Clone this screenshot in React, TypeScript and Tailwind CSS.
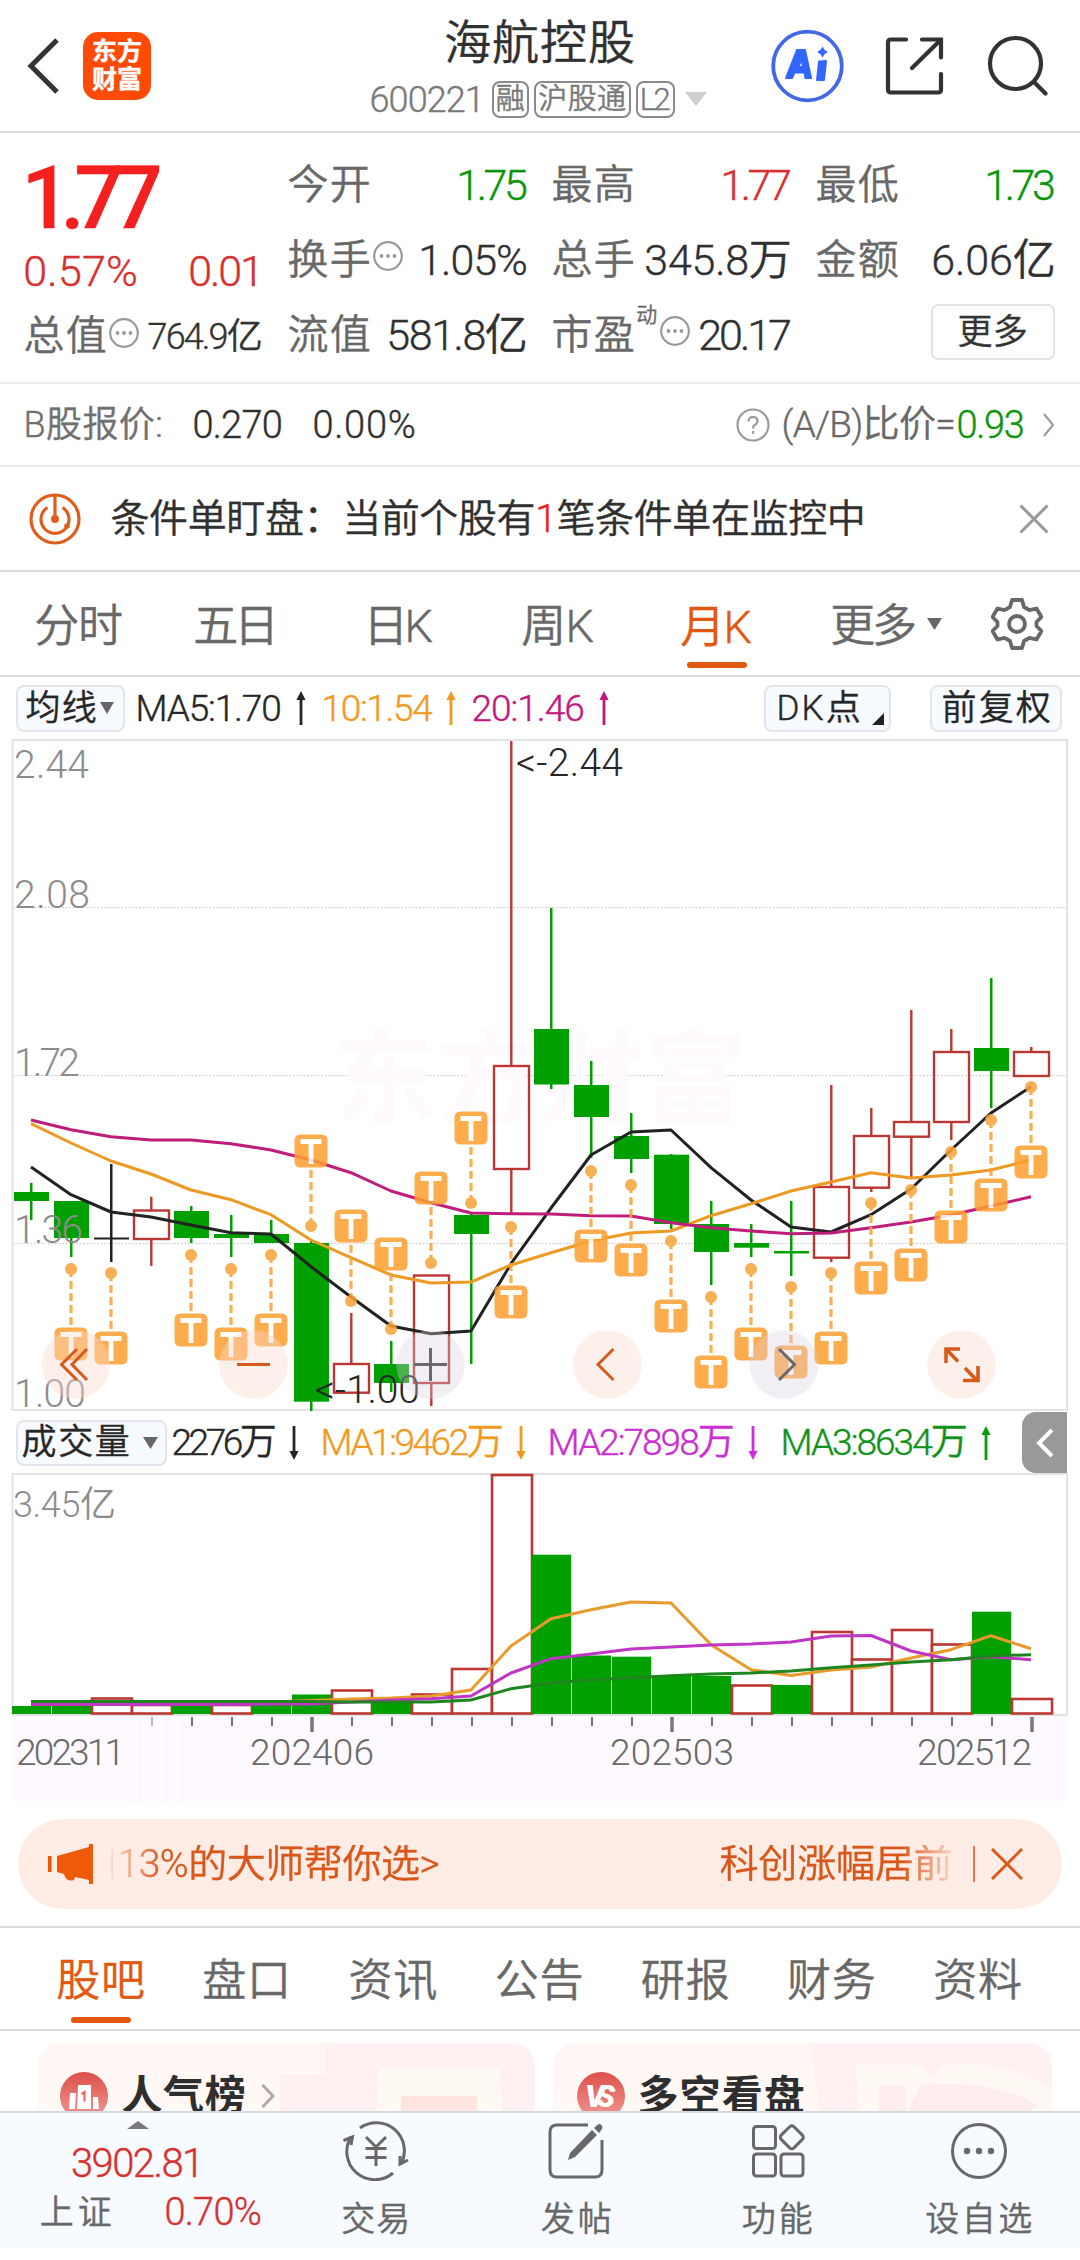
import { useLayoutEffect, useRef, useState } from "react";
import type { ReactNode } from "react";

/** Single-line text whose tracking is adjusted so that it spans exactly `w` pixels. */
function Fit({ w, className = "", children }: { w: number; className?: string; children: ReactNode }) {
  const ref = useRef<HTMLSpanElement>(null);
  const [tracking, setTracking] = useState(0);
  useLayoutEffect(() => {
    const el = ref.current;
    if (!el) return;
    el.style.letterSpacing = "0px";
    const count = Array.from(el.textContent ?? "").length;
    const size = parseFloat(getComputedStyle(el).fontSize);
    const natural = el.getBoundingClientRect().width;
    const value = count > 1 ? (w + size * 0.06 - natural) / (count - 1) : 0;
    el.style.letterSpacing = value + "px";
    setTracking(value);
  }, [w]);
  return (
    <span className={"block shrink-0 whitespace-nowrap leading-none " + className} style={{ width: w }}>
      <span ref={ref} className="-ml-[0.04em] inline-block" style={{ letterSpacing: tracking }}>
        {children}
      </span>
    </span>
  );
}

function Arrow({ down = false, className = "" }: { down?: boolean; className?: string }) {
  return (
    <svg viewBox="0 0 10 34" className={"h-[34px] w-[10px] shrink-0 " + (down ? "rotate-180 " : "") + className}>
      <path d="M5 6V34" stroke="currentColor" strokeWidth="2.8" />
      <path d="M5 0L9.6 9H0.4Z" fill="currentColor" />
    </svg>
  );
}

function Tri({ className = "" }: { className?: string }) {
  return (
    <svg viewBox="0 0 16 12" className={"shrink-0 " + className} preserveAspectRatio="none">
      <path d="M0 0H16L8 12Z" fill="currentColor" />
    </svg>
  );
}

function Dots({ className = "" }: { className?: string }) {
  return (
    <svg viewBox="0 0 30 30" className={"h-[30px] w-[30px] shrink-0 text-[#999] " + className}>
      <circle cx="15" cy="15" r="13.8" fill="none" stroke="currentColor" strokeWidth="2.2" />
      <circle cx="8.5" cy="15" r="1.9" fill="currentColor" />
      <circle cx="15" cy="15" r="1.9" fill="currentColor" />
      <circle cx="21.5" cy="15" r="1.9" fill="currentColor" />
    </svg>
  );
}

function Header() {
  return (
    <header className="grid h-[133px] grid-cols-[371px_338px_1fr] border-b-2 border-[#dcdcdc]">
      <div className="flex items-center pl-[26px]">
        <svg viewBox="0 0 34 56" className="h-[56px] w-[34px]" fill="none" stroke="#333" strokeWidth="5">
          <path d="M31 2L5 28L31 54" />
        </svg>
        <div className="ml-[23px] flex h-[68px] w-[68px] flex-col items-center justify-center rounded-[15px] bg-[#ff4a08] text-[25px] font-bold leading-[28px] text-white">
          <span>东方</span>
          <span>财富</span>
        </div>
      </div>
      <div className="flex flex-col">
        <div className="mt-[17px] flex h-[50px] items-center justify-center text-[#303030]">
          <Fit w={188} className="text-[47px]">海航控股</Fit>
        </div>
        <div className="mt-[14px] flex h-[36px] items-center text-[#7a7a7a]">
          <Fit w={113} className="mt-[2px] text-[36px]">600221</Fit>
          <span className="ml-[8px] flex h-[37px] w-[37px] items-center justify-center rounded-[8px] border-2 border-[#8a8a8a]">
            <Fit w={27} className="text-[29px]">融</Fit>
          </span>
          <span className="ml-[5px] flex h-[37px] w-[97px] items-center justify-center rounded-[8px] border-2 border-[#8a8a8a]">
            <Fit w={86} className="text-[29px]">沪股通</Fit>
          </span>
          <span className="ml-[5px] flex h-[37px] w-[39px] items-center justify-center rounded-[8px] border-2 border-[#8a8a8a]">
            <Fit w={29} className="text-[31px]">L2</Fit>
          </span>
          <Tri className="ml-[10px] h-[14px] w-[22px] text-[#cfcfcf]" />
        </div>
      </div>
      <div className="flex items-center pl-[62px]">
        <svg viewBox="0 0 73 74" className="h-[74px] w-[73px]">
          <circle cx="36.5" cy="37" r="34.3" fill="none" stroke="#4169e6" strokeWidth="3.8" />
          <g fill="#3366ff" stroke="#3366ff" strokeWidth="2" strokeLinejoin="round">
            <path fillRule="evenodd" d="M26 21H34L40 49H34.500L33.500 43.500H23.500L21 49H15ZM27.500 38H32L30.500 30Z" />
            <path d="M48 32.500L55 32L53 51H46Z" />
          </g>
          <path d="M51.700 17.500Q53 21.500 57 23Q53 24.500 51.700 28.500Q50 24.500 46 23Q50 21.500 51.700 17.500Z" fill="#3366ff" />
        </svg>
        <svg viewBox="0 0 62 62" className="ml-[40px] h-[62px] w-[62px]" fill="none" stroke="#333" strokeWidth="4.200" strokeLinecap="round">
          <path d="M22 4.500H7Q4 4.500 4 7.500V54.500Q4 57.500 7 57.500H54Q57 57.500 57 54.500V39" />
          <path d="M38 4.500H57V22.500" />
          <path d="M56 5.500L28 33" />
        </svg>
        <svg viewBox="0 0 62 62" className="ml-[40px] h-[62px] w-[62px]" fill="none" stroke="#333" strokeWidth="4.200" strokeLinecap="round">
          <circle cx="29.500" cy="28.500" r="25.500" />
          <path d="M48 47L59.500 58.500" />
        </svg>
      </div>
    </header>
  );
}

const label = "text-[41px] text-[#686868]";
const num = "text-[43px]";

function Quote() {
  return (
    <section className="grid h-[251px] grid-cols-4 gap-x-[26px] border-b-2 border-[#ececec] px-[25px]">
      <div className="flex flex-col">
        <div className="flex h-[90px] items-center pt-[40px] text-[#f4201f]">
          <Fit w={136} className="text-[87px] font-medium">1.77</Fit>
        </div>
        <div className="mt-[10px] flex h-[67px] items-center justify-between pt-[10px] text-[#d6312f]">
          <Fit w={112} className={num}>0.57%</Fit>
          <Fit w={73} className={num}>0.01</Fit>
        </div>
        <div className="mt-[5px] flex h-[63px] items-center">
          <Fit w={81} className={label}>总值</Fit>
          <Dots className="-mt-[8px] ml-[3px]" />
          <Fit w={113} className="ml-[10px] text-[36px] text-[#333]">764.9亿</Fit>
        </div>
      </div>
      <div className="flex flex-col pt-[15px]">
        <div className="flex h-[75px] items-center justify-between">
          <Fit w={81} className={label}>今开</Fit>
          <Fit w={69} className={num + " text-[#0b950b]"}>1.75</Fit>
        </div>
        <div className="flex h-[75px] items-center">
          <Fit w={81} className={label}>换手</Fit>
          <Dots className="-mt-[10px] ml-[3px]" />
          <Fit w={107} className={num + " ml-auto text-[#303030]"}>1.05%</Fit>
        </div>
        <div className="flex h-[75px] items-center justify-between">
          <Fit w={81} className={label}>流值</Fit>
          <Fit w={139} className={num + " text-[#303030]"}>581.8亿</Fit>
        </div>
      </div>
      <div className="flex flex-col pt-[15px]">
        <div className="flex h-[75px] items-center justify-between">
          <Fit w={81} className={label}>最高</Fit>
          <Fit w={69} className={num + " text-[#d6312f]"}>1.77</Fit>
        </div>
        <div className="flex h-[75px] items-center justify-between">
          <Fit w={81} className={label}>总手</Fit>
          <Fit w={145} className={num + " text-[#303030]"}>345.8万</Fit>
        </div>
        <div className="flex h-[75px] items-center">
          <Fit w={81} className={label}>市盈</Fit>
          <Fit w={20} className="-mt-[40px] ml-[3px] text-[21px] text-[#686868]">动</Fit>
          <Dots className="-mt-[10px] ml-[3px]" />
          <Fit w={91} className={num + " ml-auto text-[#303030]"}>20.17</Fit>
        </div>
      </div>
      <div className="flex flex-col pt-[15px]">
        <div className="flex h-[75px] items-center justify-between">
          <Fit w={81} className={label}>最低</Fit>
          <Fit w={69} className={num + " text-[#0b950b]"}>1.73</Fit>
        </div>
        <div className="flex h-[75px] items-center justify-between">
          <Fit w={81} className={label}>金额</Fit>
          <Fit w={122} className={num + " text-[#303030]"}>6.06亿</Fit>
        </div>
        <div className="flex h-[75px] items-center justify-end">
          <button className="-mt-[7px] flex h-[56px] w-[124px] items-center justify-center rounded-[7px] border-2 border-[#e4e4e4] font-[350] text-[#333]">
            <Fit w={68} className="text-[35px]">更多</Fit>
          </button>
        </div>
      </div>
    </section>
  );
}

function BShareRow() {
  return (
    <section className="flex h-[83px] items-center border-b-2 border-[#ececec] pl-[25px] pr-[24px]">
      <Fit w={137} className="text-[36px] text-[#707070]">B股报价:</Fit>
      <Fit w={88} className="ml-[32px] text-[38px] text-[#303030]">0.270</Fit>
      <Fit w={101} className="ml-[32px] text-[38px] text-[#303030]">0.00%</Fit>
      <svg viewBox="0 0 34 34" className="ml-auto h-[34px] w-[34px]" fill="none" stroke="#999" strokeWidth="2.200">
        <circle cx="17" cy="17" r="15.500" />
        <path d="M12.500 13.500Q12.500 9 17 9Q21.500 9 21.500 13Q21.500 15.500 18.500 17.200Q17 18.200 17 20.500" />
        <path d="M17 23V25.800" />
      </svg>
      <Fit w={172} className="ml-[13px] text-[37px] text-[#686868]">(A/B)比价=</Fit>
      <Fit w={66} className="ml-[3px] text-[38px] text-[#0b950b]">0.93</Fit>
      <svg viewBox="0 0 14 24" className="ml-[18px] h-[24px] w-[14px]" fill="none" stroke="#999" strokeWidth="2">
        <path d="M2 1L11 12L2 23" />
      </svg>
    </section>
  );
}

function AlertRow() {
  return (
    <section className="flex h-[105px] items-center border-b-2 border-[#dcdcdc] pl-[29px]">
      <svg viewBox="0 0 52 52" className="h-[52px] w-[52px]" fill="none" stroke="#de5f1d" strokeWidth="3.200">
        <circle cx="26" cy="26" r="24" />
        <path d="M18.500 14.500A14 14 0 1 0 33.500 14.500" />
        <path d="M26 2V26" />
        <circle cx="26" cy="26" r="2.400" fill="#de5f1d" />
        <circle cx="38" cy="33" r="2.800" fill="#de5f1d" stroke="none" />
      </svg>
      <Fit w={753} className="ml-[31px] pt-[2px] text-[39px] text-[#303030]">
        条件单盯盘：当前个股有<span className="text-[#ee1c1c]">1</span>笔条件单在监控中
      </Fit>
      <svg viewBox="0 0 30 30" className="ml-[154px] h-[30px] w-[30px]" stroke="#999" strokeWidth="3">
        <path d="M1.500 1.500L28.500 28.500M28.500 1.500L1.500 28.500" />
      </svg>
    </section>
  );
}

function PeriodTabs() {
  return (
    <nav className="flex h-[105px] items-center border-b-2 border-[#dcdcdc] pl-[36px] text-[45px] text-[#686868]">
      <Fit w={86} className="pt-[6px]">分时</Fit>
      <Fit w={83} className="ml-[73px] pt-[6px]">五日</Fit>
      <Fit w={67} className="ml-[87px] pt-[6px]">日K</Fit>
      <Fit w={70} className="ml-[91px] pt-[6px]">周K</Fit>
      <div className="ml-[89px] flex h-full w-[69px] flex-col items-center text-[#e2580f]">
        <div className="mt-[33px]">
          <Fit w={69}>月K</Fit>
        </div>
        <div className="mt-[12px] h-[6px] w-[60px] shrink-0 rounded-full bg-[#e2580f]" />
      </div>
      <Fit w={84} className="ml-[81px] pt-[6px]">更多</Fit>
      <Tri className="ml-[11px] h-[12px] w-[15px]" />
      <svg viewBox="0 0 52 52" className="ml-[49px] h-[52px] w-[52px]" fill="none" stroke="#686868" strokeWidth="3.800" strokeLinejoin="round">
        <path d="M21 2H31L33 9L38.500 12.200L45.500 10.500L50.500 19L45.500 24V28L50.500 33L45.500 41.500L38.500 39.800L33 43L31 50H21L19 43L13.500 39.800L6.500 41.500L1.500 33L6.500 28V24L1.500 19L6.500 10.500L13.500 12.200L19 9Z" />
        <circle cx="26" cy="26" r="8" />
      </svg>
    </nav>
  );
}

const chip = "flex items-center rounded-[8px] border-2 border-[#e2e5ea] bg-[#f7faff] text-[#262626]";

function AverageRow() {
  return (
    <div className="flex h-[62px] items-center pl-[16px] text-[37px]">
      <div className={chip + " h-[47px] w-[109px] pl-[9px]"}>
        <Fit w={69} className="text-[35px]">均线</Fit>
        <Tri className="ml-[4px] h-[12px] w-[14px] text-[#666]" />
      </div>
      <Fit w={144} className="ml-[12px] text-[#262626]">MA5:1.70</Fit>
      <Arrow className="ml-[15px] text-[#262626]" />
      <Fit w={109} className="ml-[17px] text-[#f39a1e]">10:1.54</Fit>
      <Arrow className="ml-[14px] text-[#f39a1e]" />
      <Fit w={111} className="ml-[17px] text-[#c3177d]">20:1.46</Fit>
      <Arrow className="ml-[15px] text-[#c3177d]" />
      <div className={chip + " ml-[155px] h-[47px] w-[127px] pl-[12px]"}>
        <Fit w={82} className="text-[35px]">DK点</Fit>
        <svg viewBox="0 0 12 12" className="ml-[12px] mt-[22px] h-[12px] w-[12px]">
          <path d="M12 0V12H0Z" fill="#222" />
        </svg>
      </div>
      <div className={chip + " ml-[39px] h-[47px] w-[132px] pl-[11px]"}>
        <Fit w={107} className="text-[35px]">前复权</Fit>
      </div>
    </div>
  );
}

const GREEN = "#00a000";
const RED = "#bb3733";
const xOf = (i: number) => 31 + 40 * i;

/** [kind, body top, body bottom, wick top, wick bottom] for every month */
const candles: [string, number, number, number, number][] = [
  ["g", 1191, 1200, 1182, 1219],
  ["g", 1200, 1237, 1200, 1256],
  ["k", 1236.5, 1238.5, 1163, 1261],
  ["r", 1209.5, 1238, 1195.7, 1265],
  ["g", 1210, 1237, 1205, 1242],
  ["g", 1233, 1237, 1214, 1256],
  ["g", 1233, 1242, 1219, 1242],
  ["g", 1242, 1400.7, 1239.5, 1410],
  ["r", 1363, 1391.7, 1312, 1391],
  ["g", 1363, 1382, 1340, 1391],
  ["r", 1274.5, 1382, 1274, 1405],
  ["g", 1214, 1233, 1212, 1363],
  ["r", 1065, 1168, 740, 1212],
  ["g", 1028, 1083.5, 907, 1088],
  ["g", 1084, 1116, 1060, 1157],
  ["g", 1135, 1158, 1112, 1172],
  ["g", 1153.7, 1223, 1153, 1228],
  ["g", 1223, 1251, 1200, 1284],
  ["g", 1242, 1246.7, 1223, 1256],
  ["g", 1250, 1252.5, 1200, 1275],
  ["r", 1186, 1256.7, 1084, 1261],
  ["r", 1135, 1186.7, 1107, 1191],
  ["r", 1121, 1135.7, 1009, 1177],
  ["r", 1051, 1121, 1028, 1139],
  ["g", 1047, 1070, 977, 1107],
  ["r", 1051, 1075, 1046, 1075],
];

const ma5 = [1166, 1193.7, 1211, 1216, 1224, 1231.7, 1233, 1265.7, 1296, 1325, 1332.7, 1330, 1262.7, 1207, 1154, 1131, 1129, 1166.7, 1199, 1226, 1231, 1213.7, 1188, 1149, 1112, 1085.7];
const ma10 = [1122.7, 1142, 1160, 1173, 1189, 1198.7, 1213.7, 1239, 1256.7, 1274, 1282, 1281, 1264, 1251.7, 1240, 1232, 1230, 1214.7, 1202.7, 1190, 1181, 1171.7, 1177, 1174, 1169, 1159];
const ma20 = [1119, 1128.7, 1135.7, 1139, 1139, 1142.7, 1149, 1159, 1171.7, 1190, 1201.7, 1212, 1212.7, 1213, 1214.7, 1215, 1221.7, 1226.7, 1230, 1232.7, 1232, 1226.7, 1221, 1214, 1205, 1195.7];

/** [month index, dot y, direction of the flag] */
const trades: [number, number, number][] = [
  [1, 1268, 1], [2, 1272, 1], [4, 1254, 1], [5, 1268, 1], [6, 1254, 1],
  [7, 1225, -1], [8, 1300, -1], [9, 1328, -1], [10, 1262, -1], [11, 1202, -1],
  [12, 1226, 1], [14, 1170, 1], [15, 1184, 1], [16, 1240, 1], [17, 1296, 1],
  [18, 1268, 1], [19, 1286, 1], [20, 1272, 1], [21, 1202, 1], [22, 1189, 1],
  [23, 1151, 1], [24, 1119, 1], [25, 1086, 1],
];

const volumes: [string, number][] = [
  ["g", 1705], ["g", 1705], ["r", 1697.5], ["r", 1704], ["g", 1704], ["r", 1704], ["g", 1704], ["g", 1693.5],
  ["r", 1689.5], ["g", 1701], ["r", 1693.5], ["r", 1668], ["r", 1474], ["g", 1553.7], ["g", 1654.5], ["g", 1655.7],
  ["g", 1675], ["g", 1675], ["r", 1684.5], ["g", 1684], ["r", 1631], ["r", 1658.5], ["r", 1629], ["r", 1643.5],
  ["g", 1610.7], ["r", 1698],
];
const vma1 = [1701, 1701, 1700.5, 1701, 1701, 1701, 1701, 1699.5, 1698, 1697, 1695, 1689, 1645, 1617.7, 1608.7, 1601, 1602, 1643.7, 1668.7, 1674.5, 1669, 1666, 1657, 1648.7, 1634.7, 1647.7];
const vma2 = [1703.5, 1703.5, 1703.5, 1703.5, 1703.5, 1703.5, 1703, 1703, 1701, 1699, 1697.7, 1695, 1672, 1657.7, 1653, 1648, 1646, 1644, 1643, 1641, 1635, 1634.5, 1650, 1658.7, 1655.7, 1658.7];
const vma3 = [1700.5, 1700.5, 1700.5, 1700.5, 1700.5, 1700.5, 1700.5, 1700.5, 1701, 1701, 1701, 1699, 1687.7, 1682, 1679, 1676.7, 1674.7, 1673, 1672, 1670, 1666.7, 1664, 1661, 1658.7, 1655, 1653.7];

const line = (ys: number[]) => ys.map((y, i) => `${xOf(i)},${y}`).join(" ");

function PriceChart() {
  return (
    <svg viewBox="0 738 1080 673" className="block h-[673px] w-[1080px]">
      <g stroke="#e3e3e3" fill="none">
        <path d="M12.500 739H1067V1409H12.500Z" strokeWidth="2" />
        <path d="M13 906.500H1067M13 1074.500H1067M13 1242.500H1067" stroke="#cfcfcf" strokeWidth="1" strokeDasharray="2 1.500" />
      </g>
      <text x="334" y="1114" fontSize="103" fontWeight="700" fill="#fefafe" textLength="412">东方财富</text>
      {candles.map(([kind, top, bottom, high, low], i) => {
        const x = xOf(i);
        if (kind === "r")
          return (
            <g key={i} stroke={RED} fill="none" strokeWidth="2.4">
              <rect x={x - 17} y={top} width="35" height={bottom - top} />
              <path d={`M${x + 0.3} ${high}V${top}M${x + 0.3} ${bottom}V${low}`} />
            </g>
          );
        const c = kind === "g" ? GREEN : "#222";
        return (
          <g key={i} fill={c}>
            <rect x={x - 17} y={top} width="35" height={bottom - top} />
            <rect x={x - 1} y={high} width="2.5" height={low - high} />
          </g>
        );
      })}
      <g fill="none" strokeWidth="3" strokeLinejoin="round">
        <polyline points={line(ma5)} stroke="#222" />
        <polyline points={line(ma10)} stroke="#ec9a23" />
        <polyline points={line(ma20)} stroke="#bf1d7c" />
      </g>
      <g fontSize="39" fill="#8c8c8c">
        <text x="14" y="777" textLength="75">2.44</text>
        <text x="14" y="907" textLength="76">2.08</text>
        <text x="14" y="1075" textLength="66">1.72</text>
        <text x="14" y="1242" textLength="69">1.36</text>
        <text x="14" y="1406" textLength="72">1.00</text>
      </g>
      <g fontSize="39" fill="#262626">
        <text x="516" y="775" textLength="107">&lt;-2.44</text>
        <text x="315" y="1401.500" textLength="105">&lt;-1.00</text>
      </g>
      {trades.map(([i, y, dir]) => {
        const x = xOf(i);
        const cy = y + 75 * dir;
        return (
          <g key={i} opacity="0.86">
            <circle cx={x} cy={y} r="6" fill="#f9a338" />
            <path d={`M${x} ${y}V${cy - 17 * dir}`} stroke="#f9a338" strokeWidth="3.2" strokeDasharray="8 4" />
            <rect x={x - 16.5} y={cy - 16.5} width="33" height="33" rx="5.5" fill="#ff9f30" />
            <path d={`M${x - 10.5} ${cy - 9.5}H${x + 10.5}M${x} ${cy - 9.5}V${cy + 13}`} stroke="#fff" strokeWidth="4.8" />
          </g>
        );
      })}
      {[76, 253.5, 607.5, 961.5].map((x) => (
        <circle key={x} cx={x} cy="1363.500" r="34.300" fill="#fbd9ce" opacity="0.4" />
      ))}
      {[430.5, 784].map((x) => (
        <circle key={x} cx={x} cy="1363.500" r="34.300" fill="#d8cfdf" opacity="0.35" />
      ))}
      <g fill="none" stroke="#d65a1c" strokeWidth="3">
        <path d="M77 1348L61.500 1363.500L77 1379M87 1348L72 1363.500L87 1379" />
        <path d="M237 1363.500H270" />
        <path d="M613.500 1348L598 1363.500L613.500 1379" />
        <path d="M946 1362V1348H960M946 1348L958 1360.500M965 1367L977 1379.500M978 1365V1379.500H963" strokeWidth="3.600" />
      </g>
      <g fill="none" stroke="#6b686b" strokeWidth="3">
        <path d="M414 1363.500H447M430.500 1347V1380" />
        <path d="M779 1348L794.500 1363.500L779 1379" />
      </g>
    </svg>
  );
}

function VolumeRow() {
  return (
    <div className="flex h-[61px] items-center pl-[16px] text-[37px]">
      <div className={chip + " h-[46px] w-[151px] pl-[5px]"}>
        <Fit w={106} className="text-[35px]">成交量</Fit>
        <Tri className="ml-[14px] h-[12px] w-[15px] text-[#666]" />
      </div>
      <Fit w={103} className="ml-[6px] text-[#262626]">2276万</Fit>
      <Arrow down className="ml-[13px] text-[#262626]" />
      <Fit w={181} className="ml-[23px] text-[#f39a1e]">MA1:9462万</Fit>
      <Arrow down className="ml-[13px] text-[#f39a1e]" />
      <Fit w={185} className="ml-[23px] text-[#c930cf]">MA2:7898万</Fit>
      <Arrow down className="ml-[14px] text-[#d42bd9]" />
      <Fit w={185} className="ml-[24px] text-[#12911a]">MA3:8634万</Fit>
      <Arrow className="ml-[14px] text-[#0a9a0a]" />
      <div className="ml-[31px] flex h-[61px] w-[45px] items-center justify-center rounded-l-[14px] bg-[#9b989b]">
        <svg viewBox="0 0 18 30" className="h-[30px] w-[18px]" fill="none" stroke="#fff" strokeWidth="4">
          <path d="M16 2L3 15L16 28" />
        </svg>
      </div>
    </div>
  );
}

function VolumeChart() {
  return (
    <svg viewBox="0 1472 1080 328" className="block h-[328px] w-[1080px]">
      <rect x="12" y="1714" width="1056" height="86" fill="#fdf9fe" />
      <path d="M12.500 1473H1067V1714H12.500Z" fill="none" stroke="#e3e3e3" strokeWidth="2" />
      <path d="M131 1715V1800M139.500 1715V1800M167 1715V1800M183 1715V1800" stroke="#f6f6fd" strokeWidth="1.500" />
      {volumes.map(([kind, top], i) => {
        const x = xOf(i);
        return kind === "g" ? (
          <rect key={i} x={x - 19} y={top} width="39.200" height={1713 - top} fill={GREEN} />
        ) : (
          <rect key={i} x={x - 19} y={top} width="40" height={1712.5 - top} fill="#fff" stroke={RED} strokeWidth="2.600" />
        );
      })}
      <g fill="none" strokeWidth="3" strokeLinejoin="round">
        <polyline points={line(vma1)} stroke="#e89b2b" />
        <polyline points={line(vma2)} stroke="#bf35c4" />
        <polyline points={line(vma3)} stroke="#1f861f" />
      </g>
      <text x="13" y="1516" fontSize="36" fill="#8c8c8c" textLength="103">3.45亿</text>
      <g stroke="#77777a">
        {candles.map((_, i) =>
          i < 3 ? null : (
            <path
              key={i}
              d={`M${xOf(i) + 1} 1716V${(i - 7) % 9 === 0 ? 1731 : 1725}`}
              strokeWidth={(i - 7) % 9 === 0 ? 3.5 : 2}
              opacity={i === 3 ? 0.5 : 1}
            />
          ),
        )}
      </g>
      <g fontSize="37" fill="#6a6a6a">
        <text x="16" y="1764" textLength="109">202311</text>
        <text x="250" y="1764" textLength="124">202406</text>
        <text x="610" y="1764" textLength="124">202503</text>
        <text x="917" y="1764" textLength="115">202512</text>
      </g>
    </svg>
  );
}

function Banner() {
  return (
    <div className="mx-[18px] mt-[18px] flex h-[90px] items-center rounded-full bg-[#ffede5] pl-[30px] text-[39px] text-[#d9571b]">
      <svg viewBox="0 0 45 40" className="h-[40px] w-[45px] shrink-0" fill="#ee5a08">
        <path d="M0 12H3.500V28H0ZM9 12L41 3V0H45V40H41V36L27 33L26 36Q20 38 17 33L16 30L9 28Z" />
      </svg>
      <div className="ml-[18px] flex items-center [mask-image:linear-gradient(to_right,rgba(0,0,0,0.1),black_50px)]">
        <div className="h-[30px] w-[2px] bg-[#d9571b]" />
        <Fit w={320} className="ml-[6px]">13%的大师帮你选&gt;</Fit>
      </div>
      <div className="ml-auto [mask-image:linear-gradient(to_left,rgba(0,0,0,0.15),black_50px)]">
        <Fit w={231}>科创涨幅居前</Fit>
      </div>
      <div className="ml-[21px] h-[36px] w-[2px] bg-[#de7a4b]" />
      <svg viewBox="0 0 32 32" className="ml-[16px] mr-[39px] h-[32px] w-[32px]" stroke="#dd571a" strokeWidth="3">
        <path d="M1 1L31 31M31 1L1 31" />
      </svg>
    </div>
  );
}

const sections = ["盘口", "资讯", "公告", "研报", "财务", "资料"];

function SectionTabs() {
  return (
    <nav className="mt-[17px] flex h-[105px] gap-[60px] border-y-2 border-[#dcdcdc] pl-[58px] text-[44px] text-[#686868]">
      <div className="flex flex-col items-center pt-[31px] text-[#e2580f]">
        <Fit w={86}>股吧</Fit>
        <div className="mt-[14px] h-[6px] w-[60px] rounded-full bg-[#e2580f]" />
      </div>
      {sections.map((s) => (
        <div key={s} className="pt-[31px]">
          <Fit w={86.2}>{s}</Fit>
        </div>
      ))}
    </nav>
  );
}

function Cards() {
  return (
    <section className="flex h-[80px] gap-[18px] overflow-hidden pl-[37px] pt-[12px]">
      <div className="h-[120px] w-[498px] shrink-0 overflow-hidden rounded-[24px] bg-gradient-to-b from-[#fff7f3] to-[#fffbf7]">
        <div className="grid">
          <svg viewBox="0 0 498 120" className="col-start-1 row-start-1 h-[120px] w-[498px]">
            <path d="M289 0H498V120H243V31H289Z" fill="#fff0f2" />
            <path d="M342 25H463L468 120H336Z" fill="#fff8f3" />
            <rect x="364" y="53" width="76" height="60" fill="#ffe4e2" />
          </svg>
          <div className="col-start-1 row-start-1 flex h-[106px] items-center pl-[23px]">
            <svg viewBox="0 0 48 48" className="h-[48px] w-[48px]">
              <defs>
                <linearGradient id="badge" x1="0" y1="0" x2="0" y2="1">
                  <stop offset="0" stopColor="#dd4f4a" />
                  <stop offset="1" stopColor="#f29a94" />
                </linearGradient>
              </defs>
              <circle cx="24" cy="24" r="24" fill="url(#badge)" />
              <path d="M10 21H16L15 37H9ZM18 13H31V37H17ZM33 25H38L39 37H33Z" fill="#fff" />
              <path d="M21.500 22L24.500 20V29.500" fill="none" stroke="#e06b66" strokeWidth="2.200" />
            </svg>
            <Fit w={122} className="ml-[15px] text-[41px] font-bold text-[#2e2e2e] [-webkit-text-stroke:0px]">人气榜</Fit>
            <svg viewBox="0 0 14 24" className="ml-[16px] h-[24px] w-[14px]" fill="none" stroke="#b3a9a6" strokeWidth="3">
              <path d="M1.500 1L12 12L1.500 23" />
            </svg>
          </div>
        </div>
      </div>
      <div className="h-[120px] w-[499px] shrink-0 overflow-hidden rounded-[24px] bg-gradient-to-b from-[#fff7f3] to-[#fffbf7]">
        <div className="grid">
          <svg viewBox="0 0 499 120" className="col-start-1 row-start-1 h-[120px] w-[499px]">
            <path d="M257 0H499V120H275Z" fill="#fff0f1" />
            <path d="M303 22H365L378 34L392 22Q450 16 499 45V120H310Z" fill="#fff8f3" />
            <path d="M326 42H352V75L368 42Q440 36 485 62L460 80H326Z" fill="#ffecec" />
          </svg>
          <div className="col-start-1 row-start-1 flex h-[106px] items-center pl-[24px]">
            <svg viewBox="0 0 48 48" className="h-[48px] w-[48px]">
              <circle cx="24" cy="24" r="24" fill="url(#badge)" />
              <text x="23" y="35" fontSize="31" fontWeight="900" fontStyle="italic" fill="#fff" textAnchor="middle" textLength="30">VS</text>
            </svg>
            <Fit w={165} className="ml-[14px] text-[41px] font-bold text-[#2e2e2e] [-webkit-text-stroke:0px]">多空看盘</Fit>
          </div>
        </div>
      </div>
    </section>
  );
}

function BottomBar() {
  const icon = "h-[60px] w-[66px]";
  return (
    <nav className="flex h-[137px] border-t-2 border-[#d4d8e0] bg-[#f7faff] text-[34px] text-[#686868]">
      <div className="flex w-[276px] flex-col items-center">
        <svg viewBox="0 0 22 8" className="mt-[8px] h-[8px] w-[22px]">
          <path d="M11 0L22 8H0Z" fill="#77777c" />
        </svg>
        <div className="mt-[15px] text-[40px] text-[#d6312f]">
          <Fit w={131}>3902.81</Fit>
        </div>
        <div className="mt-[9px] flex w-full items-center pl-[41px]">
          <Fit w={70} className="text-[34px]">上证</Fit>
          <Fit w={95} className="ml-[55px] text-[38px] text-[#d6312f]">0.70%</Fit>
        </div>
      </div>
      <div className="flex w-[200px] flex-col items-center pt-[8px]">
        <svg viewBox="0 0 66 60" className={icon} fill="none" stroke="#686868" strokeWidth="3">
          <path d="M17 7A28 28 0 0 1 58 43" />
          <path d="M50 52A28 28 0 0 1 8 16" />
          <path d="M0.500 19.500L9.500 16L8 24M65 39L57 43V35" />
          <path d="M23 16L33 26L43 16M33 26V45M22.500 27.500H43.500M22.500 36.500H43.500" />
        </svg>
        <Fit w={67} className="mt-[21px]">交易</Fit>
      </div>
      <div className="flex w-[201px] flex-col items-center pt-[8px]">
        <svg viewBox="0 0 66 60" className={icon} fill="none" stroke="#686868" strokeWidth="3">
          <path d="M44 4H13Q6 4 6 11V49Q6 56 13 56H51Q58 56 58 49V19" />
          <path d="M24 39L26 32L48 9L53 14L31 36Z" fill="#686868" stroke="none" />
          <path d="M50 7L54 3.500Q56 2.500 57.500 4Q59 6 58 8L55 12Z" fill="#686868" stroke="none" />
        </svg>
        <Fit w={69} className="mt-[21px]">发帖</Fit>
      </div>
      <div className="flex w-[201px] flex-col items-center pt-[8px]">
        <svg viewBox="0 0 66 60" className={icon} fill="none" stroke="#686868" strokeWidth="3">
          <rect x="8.500" y="5.500" width="22" height="22" rx="3" />
          <rect x="8.500" y="33" width="22" height="22" rx="3" />
          <rect x="36" y="33" width="22" height="22" rx="3" />
          <rect x="37.800" y="7.300" width="18" height="18" rx="3" transform="rotate(45 46.800 16.300)" />
        </svg>
        <Fit w={69} className="mt-[21px]">功能</Fit>
      </div>
      <div className="flex w-[202px] flex-col items-center pt-[8px]">
        <svg viewBox="0 0 66 60" className={icon} fill="none" stroke="#686868" strokeWidth="3">
          <circle cx="33" cy="30" r="26.500" />
          <g fill="#686868" stroke="none">
            <circle cx="21" cy="30" r="3.200" />
            <circle cx="33" cy="30" r="3.200" />
            <circle cx="45" cy="30" r="3.200" />
          </g>
        </svg>
        <Fit w={105} className="mt-[21px]">设自选</Fit>
      </div>
    </nav>
  );
}

export default function App() {
  return (
    <main className="flex h-[2260px] w-[1080px] flex-col overflow-hidden bg-white font-['Roboto','Noto_Sans_CJK_SC',sans-serif] font-[350] [-webkit-text-stroke:0.4px]">
      <Header />
      <Quote />
      <BShareRow />
      <AlertRow />
      <PeriodTabs />
      <AverageRow />
      <PriceChart />
      <VolumeRow />
      <VolumeChart />
      <Banner />
      <SectionTabs />
      <Cards />
      <BottomBar />
    </main>
  );
}
